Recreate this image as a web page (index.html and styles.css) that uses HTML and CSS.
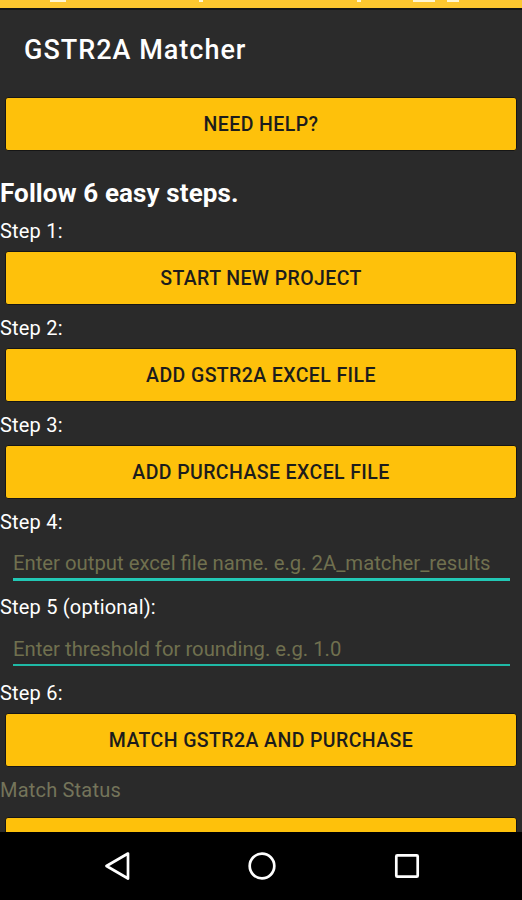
FILE: index.html
```html
<!DOCTYPE html>
<html>
<head>
<meta charset="utf-8">
<link rel="stylesheet" href="styles.css">
</head>
<body>
<div class="screen">
  <div class="statusbar">
    <span class="sb-frag f1"></span>
    <span class="sb-frag f2"></span>
    <span class="sb-frag f3"></span>
    <span class="sb-frag f4"></span>
    <span class="sb-frag f5"></span>
  </div>
  <div class="appbar"><h1 class="title">GSTR2A Matcher</h1></div>
  <main class="content">
    <button class="btn btn-help">NEED HELP?</button>
    <h2 class="heading">Follow 6 easy steps.</h2>
    <div class="label label-first">Step 1:</div>
    <button class="btn">START NEW PROJECT</button>
    <div class="label">Step 2:</div>
    <button class="btn">ADD GSTR2A EXCEL FILE</button>
    <div class="label">Step 3:</div>
    <button class="btn">ADD PURCHASE EXCEL FILE</button>
    <div class="label">Step 4:</div>
    <div class="field field-focused"><span class="placeholder">Enter output excel file name. e.g. 2A_matcher_results</span></div>
    <div class="label label-after-field">Step 5 (optional):</div>
    <div class="field field-plain"><span class="placeholder">Enter threshold for rounding. e.g. 1.0</span></div>
    <div class="label label-after-field2">Step 6:</div>
    <button class="btn">MATCH GSTR2A AND PURCHASE</button>
    <div class="label status">Match Status</div>
    <button class="btn"></button>
  </main>
  <nav class="navbar">
    <svg class="nav-icon" width="30" height="30" viewBox="0 0 30 30"><path d="M26 2.5 L4.5 15 L26 27.5 Z" fill="none" stroke="#fff" stroke-width="2.7" stroke-linejoin="round"/></svg>
    <svg class="nav-icon" width="30" height="30" viewBox="0 0 30 30"><circle cx="15" cy="15" r="12.3" fill="none" stroke="#fff" stroke-width="2.7"/></svg>
    <svg class="nav-icon" width="30" height="30" viewBox="0 0 30 30"><rect x="4.3" y="4.3" width="21.4" height="21.4" rx="1" fill="none" stroke="#fff" stroke-width="2.7"/></svg>
  </nav>
</div>
</body>
</html>
```
FILE: styles.css
```css
* { box-sizing: border-box; }
html, body { margin: 0; padding: 0; background: #2a2a2a; }
body { font-family: Roboto, "Noto Sans", sans-serif; }
.screen { width: 522px; height: 900px; display: flex; flex-direction: column; overflow: hidden; background: #2a2a2a; }
.statusbar { height: 10px; flex: none; background: #fdc72f; border-bottom: 2px solid #151515; position: relative; }
.sb-frag { position: absolute; top: 0; height: 2px; background: #fff6d0; }
.f1 { left: 50px; width: 16px; }
.f2 { left: 199px; width: 4px; }
.f3 { left: 357px; width: 4px; }
.f4 { left: 413px; width: 22px; }
.f5 { left: 447px; width: 12px; }
.appbar { height: 80px; flex: none; background: #2b2b2b; display: flex; align-items: center; padding-left: 24px; }
.title { margin: 0; color: #fff; font-size: 27px; font-weight: 500; letter-spacing: 1px; }
.content { flex: 1; display: flex; flex-direction: column; padding-top: 7px; overflow: hidden; }
.content > * { flex: none; }
.btn { height: 54px; margin: 0 5px; background: #fec10b; border: 1px solid #161616; border-radius: 3px; font-family: Roboto, sans-serif; font-size: 19.5px; font-weight: 500; color: #1c1c1c; letter-spacing: 0.4px; padding: 0; }
.heading { margin: 28px 0 0; height: 28px; line-height: 28px; color: #fff; font-size: 26px; font-weight: 700; letter-spacing: 0.1px; }
.label { height: 24px; line-height: 24px; color: #fff; font-size: 20px; margin: 11px 0 8px; letter-spacing: 0.2px; }
.label-first { margin-top: 12px; }
.label-after-field { margin-top: 14px; }
.label-after-field2 { margin-top: 15px; }
.field { height: 39px; margin: 0 12px 0 13px; display: block; }
.field-focused { border-bottom: 3px solid #22c8b5; padding-top: 9px; }
.field-plain { border-bottom: 2px solid #1fb9a6; padding-top: 10px; }
.placeholder { display: block; color: #70704f; font-size: 20.3px; line-height: 24px; white-space: nowrap; }
.status { color: #74745a; margin-bottom: 15px; }
.navbar { height: 68px; flex: none; background: #000; display: flex; justify-content: center; gap: 115px; align-items: center; padding-left: 1px; }
.nav-icon { display: block; }
```
